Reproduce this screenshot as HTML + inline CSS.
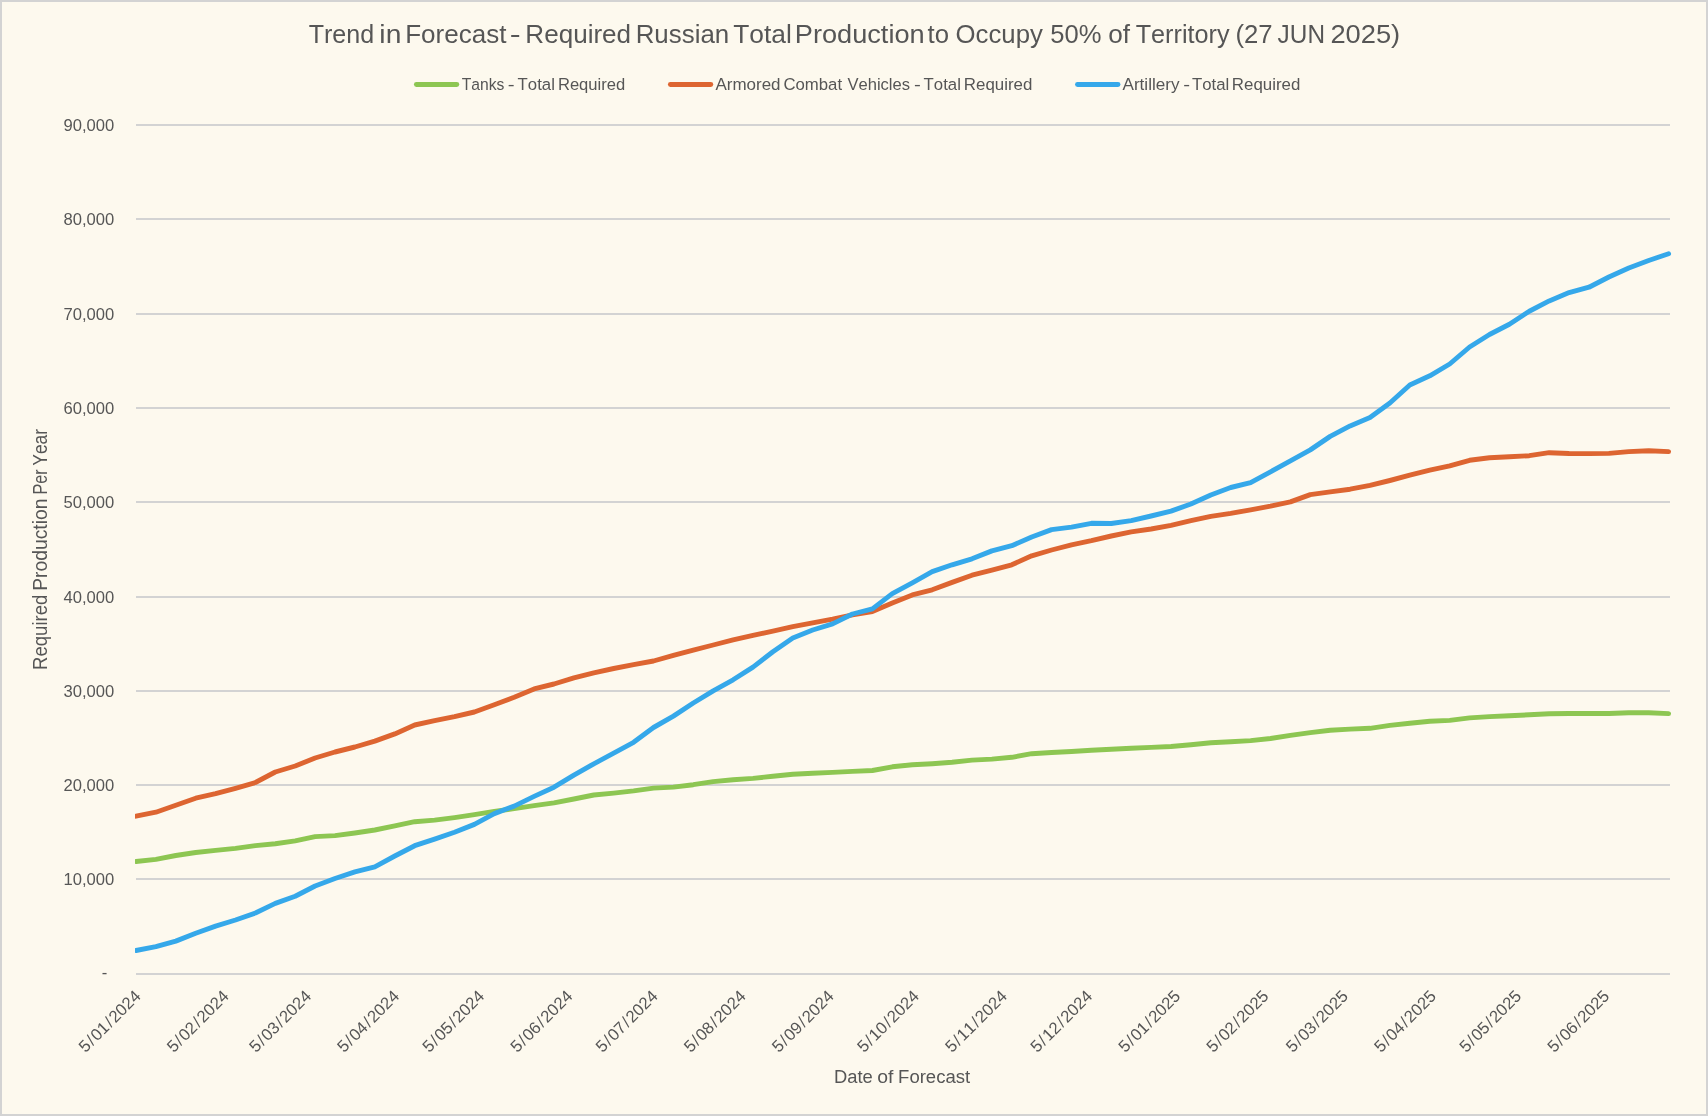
<!DOCTYPE html>
<html lang="en"><head><meta charset="utf-8"><title>Trend in Forecast</title>
<style>html,body{margin:0;padding:0;background:#fdf9ee;}body{width:1708px;height:1116px;overflow:hidden;}svg{display:block;font-family:"Liberation Sans", sans-serif;will-change:transform;}text{fill:#565656;font-kerning:none;}</style></head><body>
<svg width="1708" height="1116" viewBox="0 0 1708 1116">
<rect x="0" y="0" width="1708" height="1116" fill="#fdf9ee"/>
<rect x="1" y="1" width="1706" height="1114" fill="none" stroke="#d3d3d3" stroke-width="2"/>
<text transform="translate(308.69,43.2) scale(0.9451,1)" font-size="26.5">Trend</text>
<text transform="translate(379.36,43.2) scale(1.0653,1)" font-size="26.5">in</text>
<text transform="translate(405.16,43.2) scale(0.9824,1)" font-size="26.5">Forecast</text>
<text transform="translate(509.79,43.2) scale(1.2365,1)" font-size="26.5">-</text>
<text transform="translate(525.36,43.2) scale(0.9840,1)" font-size="26.5">Required</text>
<text transform="translate(635.68,43.2) scale(0.9767,1)" font-size="26.5">Russian</text>
<text transform="translate(733.16,43.2) scale(0.9948,1)" font-size="26.5">Total</text>
<text transform="translate(794.77,43.2) scale(1.0261,1)" font-size="26.5">Production</text>
<text transform="translate(927.61,43.2) scale(0.9715,1)" font-size="26.5">to</text>
<text transform="translate(955.53,43.2) scale(0.9720,1)" font-size="26.5">Occupy</text>
<text transform="translate(1050.23,43.2) scale(0.9651,1)" font-size="26.5">50%</text>
<text transform="translate(1108.15,43.2) scale(0.9868,1)" font-size="26.5">of</text>
<text transform="translate(1135.68,43.2) scale(0.9516,1)" font-size="26.5">Territory</text>
<text transform="translate(1235.41,43.2) scale(0.9696,1)" font-size="26.5">(27</text>
<text transform="translate(1277.62,43.2) scale(0.9193,1)" font-size="26.5">JUN</text>
<text transform="translate(1330.38,43.2) scale(1.0301,1)" font-size="26.5">2025)</text>
<line x1="416.4" y1="84.45" x2="456.8" y2="84.45" stroke="#8dc652" stroke-width="4.9" stroke-linecap="round"/>
<text transform="translate(461.65,90) scale(0.9382,1)" font-size="16.7">Tanks</text>
<text transform="translate(507.84,90) scale(1.2263,1)" font-size="16.7">-</text>
<text transform="translate(517.62,90) scale(1.0047,1)" font-size="16.7">Total</text>
<text transform="translate(557.89,90) scale(0.9950,1)" font-size="16.7">Required</text>
<line x1="670.4000000000001" y1="84.45" x2="710.8" y2="84.45" stroke="#dd6531" stroke-width="4.9" stroke-linecap="round"/>
<text transform="translate(715.47,90) scale(1.0171,1)" font-size="16.7">Armored</text>
<text transform="translate(783.40,90) scale(1.0043,1)" font-size="16.7">Combat</text>
<text transform="translate(847.43,90) scale(0.9929,1)" font-size="16.7">Vehicles</text>
<text transform="translate(914.09,90) scale(1.2263,1)" font-size="16.7">-</text>
<text transform="translate(923.62,90) scale(1.0047,1)" font-size="16.7">Total</text>
<text transform="translate(963.81,90) scale(1.0111,1)" font-size="16.7">Required</text>
<line x1="1077.5" y1="84.45" x2="1118.0" y2="84.45" stroke="#35a8ea" stroke-width="4.9" stroke-linecap="round"/>
<text transform="translate(1122.47,90) scale(1.0251,1)" font-size="16.7">Artillery</text>
<text transform="translate(1183.34,90) scale(1.2263,1)" font-size="16.7">-</text>
<text transform="translate(1192.02,90) scale(1.0047,1)" font-size="16.7">Total</text>
<text transform="translate(1231.87,90) scale(1.0103,1)" font-size="16.7">Required</text>
<rect x="136.0" y="973" width="1534.0" height="2" fill="#d3d3d3"/>
<text x="107.2" y="978.0" font-size="16.7" text-anchor="end">-</text>
<rect x="136.0" y="878" width="1534.0" height="2" fill="#d3d3d3"/>
<text x="114.3" y="885.0" font-size="16.7" text-anchor="end" textLength="50.8" lengthAdjust="spacingAndGlyphs">10,000</text>
<rect x="136.0" y="784" width="1534.0" height="2" fill="#d3d3d3"/>
<text x="114.3" y="791.0" font-size="16.7" text-anchor="end" textLength="50.8" lengthAdjust="spacingAndGlyphs">20,000</text>
<rect x="136.0" y="690" width="1534.0" height="2" fill="#d3d3d3"/>
<text x="114.3" y="697.0" font-size="16.7" text-anchor="end" textLength="50.8" lengthAdjust="spacingAndGlyphs">30,000</text>
<rect x="136.0" y="596" width="1534.0" height="2" fill="#d3d3d3"/>
<text x="114.3" y="603.0" font-size="16.7" text-anchor="end" textLength="50.8" lengthAdjust="spacingAndGlyphs">40,000</text>
<rect x="136.0" y="501" width="1534.0" height="2" fill="#d3d3d3"/>
<text x="114.3" y="508.0" font-size="16.7" text-anchor="end" textLength="50.8" lengthAdjust="spacingAndGlyphs">50,000</text>
<rect x="136.0" y="407" width="1534.0" height="2" fill="#d3d3d3"/>
<text x="114.3" y="414.0" font-size="16.7" text-anchor="end" textLength="50.8" lengthAdjust="spacingAndGlyphs">60,000</text>
<rect x="136.0" y="313" width="1534.0" height="2" fill="#d3d3d3"/>
<text x="114.3" y="320.0" font-size="16.7" text-anchor="end" textLength="50.8" lengthAdjust="spacingAndGlyphs">70,000</text>
<rect x="136.0" y="218" width="1534.0" height="2" fill="#d3d3d3"/>
<text x="114.3" y="225.0" font-size="16.7" text-anchor="end" textLength="50.8" lengthAdjust="spacingAndGlyphs">80,000</text>
<rect x="136.0" y="124" width="1534.0" height="2" fill="#d3d3d3"/>
<text x="114.3" y="131.0" font-size="16.7" text-anchor="end" textLength="50.8" lengthAdjust="spacingAndGlyphs">90,000</text>
<text transform="translate(47.2,0) rotate(-90) translate(-669.92,0) scale(1.0032,1.06)" font-size="18.5">Required</text>
<text transform="translate(47.2,0) rotate(-90) translate(-590.78,0) scale(1.0429,1.06)" font-size="18.5">Production</text>
<text transform="translate(47.2,0) rotate(-90) translate(-494.53,0) scale(0.8752,1.06)" font-size="18.5">Per</text>
<text transform="translate(47.2,0) rotate(-90) translate(-465.78,0) scale(0.9462,1.06)" font-size="18.5">Year</text>
<text transform="translate(833.99,1083) scale(0.9935,1)" font-size="18.5">Date</text>
<text transform="translate(877.18,1083) scale(1.0491,1)" font-size="18.5">of</text>
<text transform="translate(898.08,1083) scale(1.0012,1)" font-size="18.5">Forecast</text>
<text transform="translate(141.7,997.2) rotate(-45)" font-size="16.7" text-anchor="end">5<tspan dx="1.3">/</tspan><tspan dx="1.3">01</tspan><tspan dx="1.3">/</tspan><tspan dx="1.3">2024</tspan></text>
<text transform="translate(229.8,997.2) rotate(-45)" font-size="16.7" text-anchor="end">5<tspan dx="1.3">/</tspan><tspan dx="1.3">02</tspan><tspan dx="1.3">/</tspan><tspan dx="1.3">2024</tspan></text>
<text transform="translate(312.2,997.2) rotate(-45)" font-size="16.7" text-anchor="end">5<tspan dx="1.3">/</tspan><tspan dx="1.3">03</tspan><tspan dx="1.3">/</tspan><tspan dx="1.3">2024</tspan></text>
<text transform="translate(400.2,997.2) rotate(-45)" font-size="16.7" text-anchor="end">5<tspan dx="1.3">/</tspan><tspan dx="1.3">04</tspan><tspan dx="1.3">/</tspan><tspan dx="1.3">2024</tspan></text>
<text transform="translate(485.4,997.2) rotate(-45)" font-size="16.7" text-anchor="end">5<tspan dx="1.3">/</tspan><tspan dx="1.3">05</tspan><tspan dx="1.3">/</tspan><tspan dx="1.3">2024</tspan></text>
<text transform="translate(573.5,997.2) rotate(-45)" font-size="16.7" text-anchor="end">5<tspan dx="1.3">/</tspan><tspan dx="1.3">06</tspan><tspan dx="1.3">/</tspan><tspan dx="1.3">2024</tspan></text>
<text transform="translate(658.7,997.2) rotate(-45)" font-size="16.7" text-anchor="end">5<tspan dx="1.3">/</tspan><tspan dx="1.3">07</tspan><tspan dx="1.3">/</tspan><tspan dx="1.3">2024</tspan></text>
<text transform="translate(746.8,997.2) rotate(-45)" font-size="16.7" text-anchor="end">5<tspan dx="1.3">/</tspan><tspan dx="1.3">08</tspan><tspan dx="1.3">/</tspan><tspan dx="1.3">2024</tspan></text>
<text transform="translate(834.9,997.2) rotate(-45)" font-size="16.7" text-anchor="end">5<tspan dx="1.3">/</tspan><tspan dx="1.3">09</tspan><tspan dx="1.3">/</tspan><tspan dx="1.3">2024</tspan></text>
<text transform="translate(920.1,997.2) rotate(-45)" font-size="16.7" text-anchor="end">5<tspan dx="1.3">/</tspan><tspan dx="1.3">10</tspan><tspan dx="1.3">/</tspan><tspan dx="1.3">2024</tspan></text>
<text transform="translate(1008.1,997.2) rotate(-45)" font-size="16.7" text-anchor="end">5<tspan dx="1.3">/</tspan><tspan dx="1.3">11</tspan><tspan dx="1.3">/</tspan><tspan dx="1.3">2024</tspan></text>
<text transform="translate(1093.4,997.2) rotate(-45)" font-size="16.7" text-anchor="end">5<tspan dx="1.3">/</tspan><tspan dx="1.3">12</tspan><tspan dx="1.3">/</tspan><tspan dx="1.3">2024</tspan></text>
<text transform="translate(1181.4,997.2) rotate(-45)" font-size="16.7" text-anchor="end">5<tspan dx="1.3">/</tspan><tspan dx="1.3">01</tspan><tspan dx="1.3">/</tspan><tspan dx="1.3">2025</tspan></text>
<text transform="translate(1269.5,997.2) rotate(-45)" font-size="16.7" text-anchor="end">5<tspan dx="1.3">/</tspan><tspan dx="1.3">02</tspan><tspan dx="1.3">/</tspan><tspan dx="1.3">2025</tspan></text>
<text transform="translate(1349.0,997.2) rotate(-45)" font-size="16.7" text-anchor="end">5<tspan dx="1.3">/</tspan><tspan dx="1.3">03</tspan><tspan dx="1.3">/</tspan><tspan dx="1.3">2025</tspan></text>
<text transform="translate(1437.1,997.2) rotate(-45)" font-size="16.7" text-anchor="end">5<tspan dx="1.3">/</tspan><tspan dx="1.3">04</tspan><tspan dx="1.3">/</tspan><tspan dx="1.3">2025</tspan></text>
<text transform="translate(1522.3,997.2) rotate(-45)" font-size="16.7" text-anchor="end">5<tspan dx="1.3">/</tspan><tspan dx="1.3">05</tspan><tspan dx="1.3">/</tspan><tspan dx="1.3">2025</tspan></text>
<text transform="translate(1610.4,997.2) rotate(-45)" font-size="16.7" text-anchor="end">5<tspan dx="1.3">/</tspan><tspan dx="1.3">06</tspan><tspan dx="1.3">/</tspan><tspan dx="1.3">2025</tspan></text>
<clipPath id="pc"><rect x="135" y="100" width="1545" height="890"/></clipPath><g clip-path="url(#pc)">
<polyline points="136.0,861.5 155.9,859.4 175.8,855.5 195.7,852.5 215.6,850.4 235.5,848.4 255.4,845.6 275.3,843.7 295.2,840.9 315.1,836.6 335.0,835.6 354.9,833.0 374.8,830.0 394.8,825.9 414.7,821.7 434.6,820.1 454.5,817.6 474.4,814.7 494.3,811.4 514.2,808.6 534.1,805.7 554.0,802.9 573.9,799.0 593.8,795.0 613.7,793.1 633.6,790.9 653.5,788.1 673.4,787.1 693.3,784.7 713.2,781.6 733.1,779.7 753.0,778.4 772.9,776.2 792.8,774.3 812.7,773.3 832.6,772.4 852.5,771.4 872.4,770.5 892.3,766.8 912.3,764.8 932.2,763.7 952.1,762.2 972.0,760.1 991.9,759.1 1011.8,757.3 1031.7,753.7 1051.6,752.5 1071.5,751.5 1091.4,750.3 1111.3,749.3 1131.2,748.3 1151.1,747.4 1171.0,746.5 1190.9,744.7 1210.8,742.8 1230.7,741.8 1250.6,740.6 1270.5,738.5 1290.4,735.4 1310.3,732.6 1330.2,730.3 1350.1,729.1 1370.0,728.3 1389.9,725.4 1409.8,723.2 1429.8,721.3 1449.7,720.4 1469.6,717.9 1489.5,716.6 1509.4,715.7 1529.3,714.8 1549.2,713.8 1569.1,713.5 1589.0,713.5 1608.9,713.5 1628.8,712.8 1648.7,712.8 1668.6,713.6" fill="none" stroke="#8dc652" stroke-width="4.9" stroke-linejoin="round" stroke-linecap="round"/>
<polyline points="136.0,816.2 155.9,812.2 175.8,805.3 195.7,798.2 215.6,793.7 235.5,788.3 255.4,782.5 275.3,772.0 295.2,766.0 315.1,758.0 335.0,752.0 354.9,747.0 374.8,741.1 394.8,733.9 414.7,725.0 434.6,720.7 454.5,716.7 474.4,712.0 494.3,704.7 514.2,697.2 534.1,688.9 554.0,684.0 573.9,677.8 593.8,672.8 613.7,668.5 633.6,664.7 653.5,661.0 673.4,655.4 693.3,650.1 713.2,645.0 733.1,639.9 753.0,635.4 772.9,631.2 792.8,626.6 812.7,622.8 832.6,619.1 852.5,614.8 872.4,611.6 892.3,603.0 912.3,594.9 932.2,589.8 952.1,582.4 972.0,575.2 991.9,570.1 1011.8,564.8 1031.7,555.8 1051.6,550.0 1071.5,544.8 1091.4,540.7 1111.3,536.0 1131.2,531.9 1151.1,529.0 1171.0,525.4 1190.9,520.7 1210.8,516.4 1230.7,513.4 1250.6,509.8 1270.5,506.1 1290.4,501.9 1310.3,494.6 1330.2,491.9 1350.1,489.2 1370.0,485.4 1389.9,480.5 1409.8,475.2 1429.8,470.2 1449.7,465.9 1469.6,460.3 1489.5,457.8 1509.4,456.7 1529.3,455.7 1549.2,452.7 1569.1,453.5 1589.0,453.6 1608.9,453.4 1628.8,451.6 1648.7,450.7 1668.6,451.6" fill="none" stroke="#dd6531" stroke-width="4.9" stroke-linejoin="round" stroke-linecap="round"/>
<polyline points="136.0,950.5 155.9,946.7 175.8,941.1 195.7,933.3 215.6,926.1 235.5,920.0 255.4,913.0 275.3,903.4 295.2,896.3 315.1,886.0 335.0,878.5 354.9,871.9 374.8,866.8 394.8,856.0 414.7,845.7 434.6,839.1 454.5,832.2 474.4,824.4 494.3,813.6 514.2,806.1 534.1,796.4 554.0,787.2 573.9,775.1 593.8,763.8 613.7,753.1 633.6,742.3 653.5,727.5 673.4,716.1 693.3,703.0 713.2,690.8 733.1,679.8 753.0,667.1 772.9,651.8 792.8,638.1 812.7,630.0 832.6,623.9 852.5,614.0 872.4,608.9 892.3,593.6 912.3,582.8 932.2,571.6 952.1,564.8 972.0,558.8 991.9,550.9 1011.8,545.7 1031.7,537.0 1051.6,529.6 1071.5,527.1 1091.4,523.3 1111.3,523.5 1131.2,520.6 1151.1,516.0 1171.0,511.1 1190.9,504.0 1210.8,495.0 1230.7,487.5 1250.6,482.6 1270.5,471.8 1290.4,460.9 1310.3,449.9 1330.2,436.4 1350.1,425.9 1370.0,417.5 1389.9,403.0 1409.8,385.0 1429.8,375.8 1449.7,364.0 1469.6,347.0 1489.5,334.5 1509.4,324.3 1529.3,311.2 1549.2,300.9 1569.1,292.6 1589.0,287.2 1608.9,277.0 1628.8,268.0 1648.7,260.5 1668.6,253.8" fill="none" stroke="#35a8ea" stroke-width="4.9" stroke-linejoin="round" stroke-linecap="round"/>
</g>
</svg></body></html>
